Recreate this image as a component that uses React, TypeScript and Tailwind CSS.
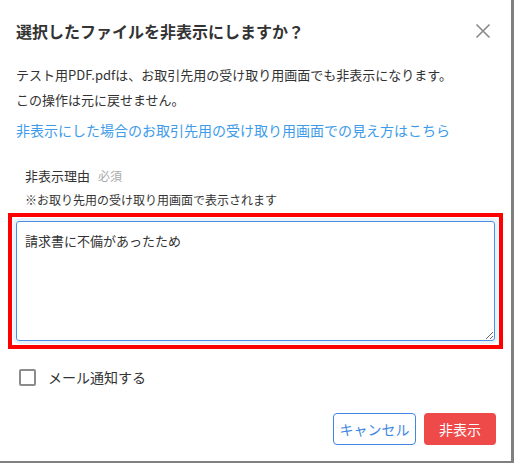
import { useState } from 'react';

const font = { fontFamily: '"Noto Sans CJK JP", "Noto Sans", sans-serif' };

export default function App() {
    const [riyu, setRiyu] = useState('請求書に不備があったため');
    const [mail, setMail] = useState(false);

    return (
        <div className="w-[514px] h-[463px] bg-[#808080]" style={font}>
            <div className="w-[511px] h-[461px] bg-white text-[#333333] flex flex-col">
                {/* cabecera */}
                <div className="flex items-center justify-between pl-4 pr-[20px] pt-5 pb-5">
                    <h2 className="text-[16px] leading-[22px] font-bold">選択したファイルを非表示にしますか？</h2>
                    <button className="w-[16px] h-[16px] flex items-center justify-center text-[#8a8a8a]">
                        <svg width="16" height="16" viewBox="0 0 16 16" fill="none" stroke="currentColor" strokeWidth="1.6">
                            <path d="M1.5 1.5 L14.5 14.5 M14.5 1.5 L1.5 14.5" />
                        </svg>
                    </button>
                </div>

                <div className="pl-4 text-[13px] leading-[25px]">
                    <p>テスト用PDF.pdfは、お取引先用の受け取り用画面でも非表示になります。</p>
                    <p>この操作は元に戻せません。</p>
                </div>
                <a className="pl-4 mt-[6px] text-[14px] leading-[24px] text-[#3d9be9] cursor-pointer">
                    非表示にした場合のお取引先用の受け取り用画面での見え方はこちら
                </a>

                <div className="pl-[25px] mt-[22px]">
                    <div className="text-[13px] leading-[24px]">
                        非表示理由<span className="ml-2 text-[12px] text-[#aaaaaa]">必須</span>
                    </div>
                    <div className="text-[12px] leading-[24px]">※お取り先用の受け取り用画面で表示されます</div>
                </div>

                <div className="ml-[8px] mt-px w-[495px] h-[136px] border-4 border-[#ff0000] p-[4px]">
                    <textarea
                        value={riyu}
                        onChange={(e) => setRiyu(e.target.value)}
                        className="block w-full h-full border border-[#4a8fe4] rounded-[3px] px-2 py-2 text-[13px] leading-[22px] text-[#333333] outline-none shadow-[0_0_0_3px_rgba(74,143,228,0.12)]"
                        style={font}
                    />
                </div>

                <label className="mt-4 ml-[19px] flex items-center gap-[12px] h-[24px] cursor-pointer">
                    <span
                        onClick={() => setMail(!mail)}
                        className={`w-[17px] h-[17px] border-2 rounded-[2px] ${mail ? 'border-[#4a8fe4] bg-[#4a8fe4]' : 'border-[#8c8c8c] bg-white'}`}
                    />
                    <span className="text-[14px] leading-[24px]">メール通知する</span>
                </label>

                <div className="mt-[24px] pr-[15px] flex justify-end gap-2">
                    <button className="w-[83px] h-[32px] border border-[#3f87e2] rounded-[4px] text-[#3f87e2] text-[14px] bg-white">
                        キャンセル
                    </button>
                    <button className="w-[72px] h-[32px] rounded-[4px] bg-[#ee4a4a] text-white text-[14px]">
                        非表示
                    </button>
                </div>
            </div>
        </div>
    );
}
